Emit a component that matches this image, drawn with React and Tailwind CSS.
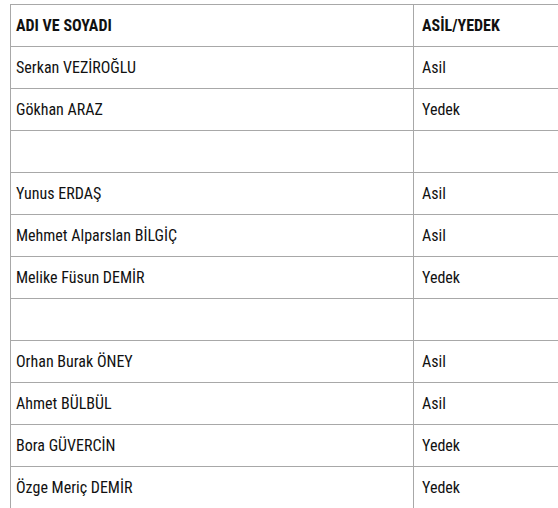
import React from "react";

const rows = [
  { name: "Serkan VEZİROĞLU", status: "Asil" },
  { name: "Gökhan ARAZ", status: "Yedek" },
  { name: "", status: "" },
  { name: "Yunus ERDAŞ", status: "Asil" },
  { name: "Mehmet Alparslan BİLGİÇ", status: "Asil" },
  { name: "Melike Füsun DEMİR", status: "Yedek" },
  { name: "", status: "" },
  { name: "Orhan Burak ÖNEY", status: "Asil" },
  { name: "Ahmet BÜLBÜL", status: "Asil" },
  { name: "Bora GÜVERCİN", status: "Yedek" },
  { name: "Özge Meriç DEMİR", status: "Yedek" },
];

const App = () => {
  return (
    <div
      className="w-[558px] h-[508px] overflow-hidden bg-white pl-[10px] pt-[4px]"
      style={{ fontFamily: '"Roboto Condensed", "Liberation Sans Narrow", "DejaVu Sans Condensed", Roboto, sans-serif' }}
    >
      <table className="w-[580px] border-collapse text-[16px] text-[#111]">
        <thead>
          <tr className="h-[42px]">
            <th className="w-[403px] border border-[#a8a8a8] pl-[5px] text-left font-bold">ADI VE SOYADI</th>
            <th className="border border-[#a8a8a8] pl-[8px] text-left font-bold">ASİL/YEDEK</th>
          </tr>
        </thead>
        <tbody>
          {rows.map((r, i) => (
            <tr key={i} className="h-[42px]">
              <td className="border border-[#a8a8a8] pl-[5px]">{r.name}</td>
              <td className="border border-[#a8a8a8] pl-[8px]">{r.status}</td>
            </tr>
          ))}
        </tbody>
      </table>
    </div>
  );
};

export default App;
